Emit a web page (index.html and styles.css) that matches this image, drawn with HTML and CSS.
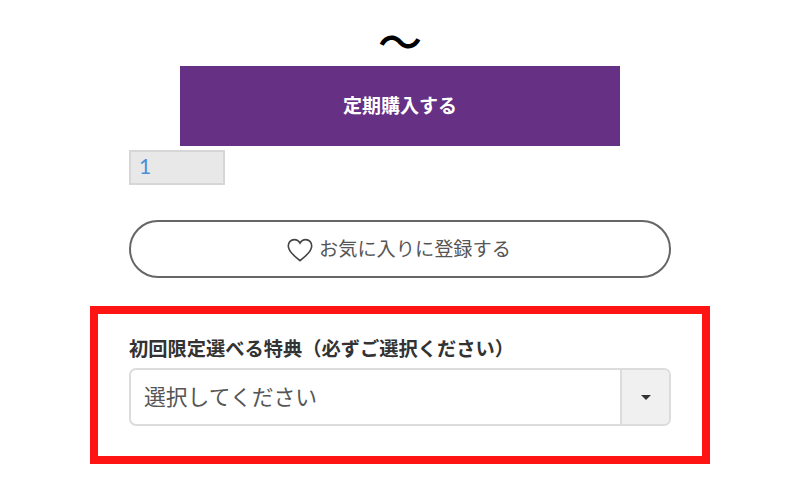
FILE: index.html
```html
<!DOCTYPE html>
<html lang="ja">
<head>
<meta charset="utf-8">
<title>定期購入</title>
<link rel="stylesheet" href="styles.css">
</head>
<body>
<main class="page">
  <div class="tilde">〜</div>
  <button class="buy"><span class="buy-text">定期購入する</span></button>
  <div class="qty">1</div>
  <button class="fav">
    <svg class="heart" viewBox="0 0 26 24" width="26" height="24" aria-hidden="true"><path d="M13 22.6C8.600 18.800 1.300 14.200 1.300 7.900 1.300 4.300 4 1.600 7.300 1.600c2.400 0 4.500 1.300 5.700 3.500 1.200-2.200 3.300-3.500 5.700-3.500 3.300 0 6 2.700 6 6.300 0 6.300-7.300 10.900-11.700 14.700z"/></svg>
    <span class="fav-text">お気に入りに登録する</span>
  </button>
  <section class="bonus">
    <h2 class="bonus-label">初回限定選べる特典（必ずご選択ください）</h2>
    <div class="select">
      <div class="select-value">選択してください</div>
      <div class="select-arrow"><span class="caret"></span></div>
    </div>
  </section>
</main>
</body>
</html>
```
FILE: styles.css
```css
* { box-sizing: border-box; }
html, body { margin: 0; padding: 0; background: #fff; }
body {
  width: 800px;
  height: 500px;
  overflow: hidden;
  font-family: "Noto Sans CJK JP", "Noto Sans", sans-serif;
}
.page {
  display: flex;
  flex-direction: column;
  align-items: flex-start;
  padding: 16px 0 0 90px;
  width: 710px;
}
.tilde {
  margin-left: 290px;
  width: 40px;
  height: 50px;
  font-size: 44px;
  line-height: 49px;
  font-weight: 500;
  color: #000;
  display: flex;
  justify-content: center;
  white-space: nowrap;
}
.buy {
  margin: 0 0 0 90px;
  width: 440px;
  height: 80px;
  border: 0;
  padding: 0 0 3px;
  background: #663085;
  color: #fff;
  font: 700 19px "Noto Sans CJK JP", sans-serif;
}
.qty {
  margin: 4px 0 0 39px;
  width: 96px;
  height: 35px;
  padding-left: 8px;
  background: #e8e8e8;
  border: 2px solid #d6d6d6;
  color: #4a90d9;
  font: 400 21px/28px "Lato", sans-serif;
}
.fav {
  margin: 35px 0 0 39px;
  width: 542px;
  height: 58px;
  display: flex;
  align-items: center;
  justify-content: center;
  gap: 6px;
  padding: 0 0 2px;
  background: #fff;
  border: 2px solid #666;
  border-radius: 29px;
  color: #555;
  font: 400 19.200px "Noto Sans CJK JP", sans-serif;
}
.heart {
  margin-left: -2px;
  margin-top: 4px;
  fill: none;
  stroke: #444;
  stroke-width: 1.6;
}
.bonus {
  margin-top: 28px;
  width: 620px;
  height: 158px;
  border: 8px solid #ff1414;
  padding: 24px 31px 0;
}
.bonus-label {
  margin: 0;
  height: 30px;
  font-size: 19.250px;
  line-height: 20px;
  font-weight: 700;
  color: #333;
  white-space: nowrap;
}
.select {
  display: flex;
  width: 542px;
  height: 58px;
  border: 2px solid #dcdcdc;
  border-radius: 7px;
  overflow: hidden;
}
.select-value {
  flex: 1;
  padding-left: 13px;
  font-size: 21.800px;
  line-height: 51px;
  color: #555;
}
.select-arrow {
  width: 49px;
  display: flex;
  align-items: center;
  justify-content: center;
  background: #f0f0f0;
  border-left: 2px solid #dcdcdc;
}
.caret {
  width: 0;
  height: 0;
  border-left: 5px solid transparent;
  border-right: 5px solid transparent;
  border-top: 5px solid #333;
}
```
